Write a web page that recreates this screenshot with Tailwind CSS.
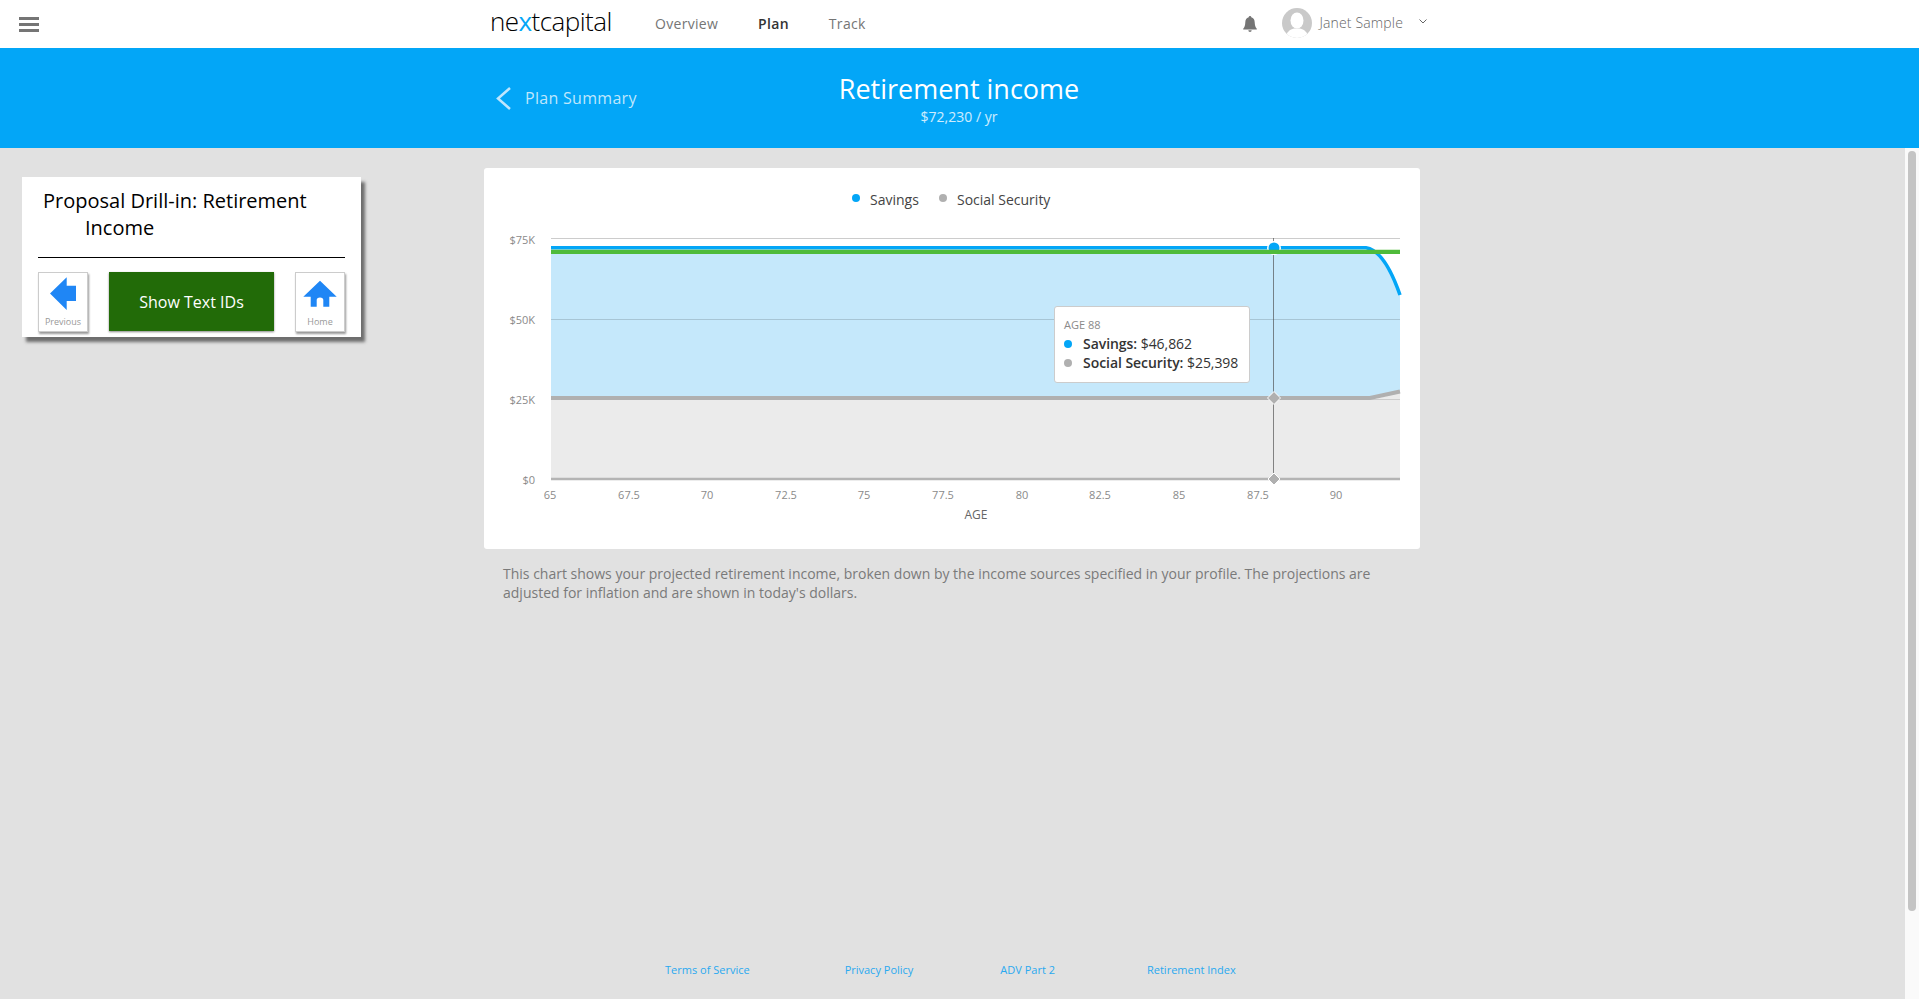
<!DOCTYPE html>
<html lang="en">
<head>
    <meta charset="UTF-8">
    <title>Retirement income</title>
    <script src="https://cdn.jsdelivr.net/npm/@tailwindcss/browser@4"></script>
</head>
<body class="bg-white font-['Open_Sans',sans-serif] overflow-hidden">
<div class="flex flex-col w-[1919px] h-[999px] bg-white">

    <!-- top nav -->
    <header class="flex items-center h-12 bg-white">
        <svg class="ml-[19px] w-5 h-[15px]" viewBox="0 0 20 15"><path d="M0 0h20v3H0zM0 6h20v3H0zM0 12h20v3H0z" fill="#757575"/></svg>
        <div class="ml-[451px] -mt-[6px] w-[125px] text-[26px] font-light tracking-[-0.55px] text-black leading-none whitespace-nowrap">ne<span class="text-[#03a6f7] font-normal">x</span>tcapital</div>
        <nav class="flex ml-10 gap-10 text-sm font-medium text-[#757575] tracking-[0.3px]">
            <a>Overview</a>
            <a class="text-[#333] font-semibold">Plan</a>
            <a>Track</a>
        </nav>
        <div class="flex items-center ml-auto mr-[492px]">
            <svg class="-mt-px w-4 h-4" viewBox="0 0 16 16"><path d="M8 0a1.3 1.3 0 0 1 1.3 1.3C11.6 2 12.6 3.8 12.7 6.200c.1 3 .6 4.800 2.100 6.600v.7H1.200v-.7C2.700 11 3.200 9.200 3.300 6.200 3.400 3.800 4.400 2 6.700 1.300A1.300 1.300 0 0 1 8 0zM6.300 14.300h3.400a1.700 1.700 0 0 1-3.400 0z" fill="#757575"/></svg>
            <svg class="ml-6 -mt-[3px] w-[30px] h-[30px]" viewBox="0 0 30 30"><defs><clipPath id="av"><circle cx="15" cy="15" r="15"/></clipPath></defs><circle cx="15" cy="15" r="15" fill="#c9c9c9"/><g clip-path="url(#av)" fill="#fff"><ellipse cx="15" cy="12.500" rx="6.500" ry="8"/><path d="M4 30c0-6 4-8.500 8-9.500h6c4 1 8 3.500 8 9.500z"/></g></svg>
            <span class="ml-[7px] -mt-[3px] text-sm font-light text-[#666] tracking-[0.15px]">Janet Sample</span>
            <svg class="ml-4 -mt-[5px] w-2 h-[5px]" viewBox="0 0 8 5"><path d="M.5.500 4 4 7.500.500" fill="none" stroke="#666"/></svg>
        </div>
    </header>

    <!-- title bar -->
    <div class="flex items-center h-[100px] bg-[#03a6f7] text-white">
        <svg class="ml-[496px] w-[15px] h-[23px]" viewBox="0 0 15 23"><path d="M14 1 2 11.500 14 22" fill="none" stroke="#bfe6fd" stroke-width="2.500"/></svg>
        <a class="ml-[14px] w-[112px] text-base text-[#bfe6fd] tracking-[0.3px] whitespace-nowrap">Plan Summary</a>
        <div class="ml-[122px] w-[400px] pt-[2px] text-center">
            <div class="text-[27px] leading-[36px]">Retirement income</div>
            <div class="text-sm leading-5 text-white/80">$72,230 / yr</div>
        </div>
    </div>

    <div class="flex h-[851px]">
        <main class="flex flex-col flex-1 bg-[#e1e1e1]">
            <div class="flex flex-1">
                <!-- proposal panel -->
                <div class="w-[484px] pl-[22px] pt-[29px]">
                    <div class="w-[339px] h-[160px] bg-white shadow-[4px_5px_3px_#6e6e6e]">
                        <h2 class="pt-[10px] pl-[63px] pr-4 -indent-[42px] text-xl leading-[27px] text-black">Proposal Drill-in: Retirement Income</h2>
                        <div class="mx-4 mt-[16px] border-t border-black"></div>
                        <div class="flex justify-between mx-4 mt-[14px]">
                            <button class="flex flex-col items-center w-[50px] h-[60px] bg-white border border-[#ccc] shadow-[1px_2px_2px_#999]">
                                <svg class="w-[50px] h-[44px] -mx-px -mt-px" viewBox="0 0 50 44"><path d="M12 21.500 28.700 5.300v8.400H38v15.300h-9.300V38z" fill="#1f86f5"/></svg>
                                <span class="text-[9px] leading-3 text-[#999]">Previous</span>
                            </button>
                            <button class="w-[165px] h-[59px] bg-[#226b08] text-white text-base shadow-[0_1px_2px_#888]">Show Text IDs</button>
                            <button class="flex flex-col items-center w-[50px] h-[60px] bg-white border border-[#ccc] shadow-[1px_2px_2px_#999]">
                                <svg class="w-[50px] h-[44px] -mx-px -mt-px" viewBox="0 0 50 44"><path d="M25 8.700 41.700 24.700H34.300V34.700H28.300V28a3.300 2.500 0 0 0-6.600 0v6.700H15.700V24.700H8.300z" fill="#1f86f5"/></svg>
                                <span class="text-[9px] leading-3 text-[#999]">Home</span>
                            </button>
                        </div>
                    </div>
                </div>

                <!-- chart column -->
                <div class="w-[936px] pt-5">
                    <div class="relative h-[381px] bg-white rounded-[3px]">
                        <svg class="w-[936px] h-[381px]" viewBox="484 168 936 381" font-family="Open Sans, sans-serif">
                            <circle cx="856" cy="198" r="4" fill="#03a6f7"/>
                            <text x="870" y="205" font-size="14" fill="#444">Savings</text>
                            <circle cx="943" cy="198" r="4" fill="#b0b0b0"/>
                            <text x="957" y="205" font-size="14" fill="#444">Social Security</text>

                            <path d="M551 250H1370C1385 256 1393 278 1400 295V396H551Z" fill="#c5e8fb"/>
                            <path d="M551 400H1370L1400 393V479H551Z" fill="#ebebeb"/>

                            <path d="M551 238.500H1400" stroke="#ccc"/>
                            <path d="M551 319.500H1400" stroke="#000" stroke-opacity=".15"/>
                            <path d="M1370 399.500H1400" stroke="#ccc"/>

                            <path d="M551 247.700H1366C1381 250 1392 272 1400 295" fill="none" stroke="#03a6f7" stroke-width="3.500"/>
                            <path d="M551 398H1370L1400 391.500" fill="none" stroke="#b0b0b0" stroke-width="4"/>
                            <path d="M551 479H1400" stroke="#b4b4b4" stroke-width="2.500"/>

                            <path d="M1273.500 238V479" stroke="#4a4a4a" stroke-opacity=".65"/>
                            <circle cx="1274" cy="248" r="7" fill="#fff"/>
                            <circle cx="1274" cy="248" r="5.500" fill="#03a6f7"/>
                            <path d="M551 251.800H1400" stroke="#4fbb3a" stroke-width="4.300"/>
                            <path d="M1274 391.500 1280.500 398 1274 404.500 1267.500 398Z" fill="#b0b0b0" stroke="#fff"/>
                            <path d="M1274 473 1280 479 1274 485 1268 479Z" fill="#b0b0b0" stroke="#fff"/>

                            <g font-size="11" fill="#8a8a8a" text-anchor="end">
                                <text x="535" y="244">$75K</text>
                                <text x="535" y="324">$50K</text>
                                <text x="535" y="404">$25K</text>
                                <text x="535" y="484">$0</text>
                            </g>
                            <g font-size="11" fill="#8a8a8a" text-anchor="middle">
                                <text x="550" y="499">65</text>
                                <text x="629" y="499">67.5</text>
                                <text x="707" y="499">70</text>
                                <text x="786" y="499">72.5</text>
                                <text x="864" y="499">75</text>
                                <text x="943" y="499">77.5</text>
                                <text x="1022" y="499">80</text>
                                <text x="1100" y="499">82.5</text>
                                <text x="1179" y="499">85</text>
                                <text x="1258" y="499">87.5</text>
                                <text x="1336" y="499">90</text>
                            </g>
                            <text x="976" y="519" font-size="12" fill="#666" text-anchor="middle">AGE</text>
                        </svg>

                        <!-- tooltip -->
                        <div class="absolute left-[570px] top-[138px] w-[196px] h-[77px] bg-white border border-[#ccc] rounded-[3px] pl-[9px] pt-[10px]">
                            <div class="text-[11px] leading-4 text-[#8a8a8a]">AGE 88</div>
                            <div class="flex items-center h-[19px] mt-[1px] text-sm text-[#333] tracking-[-0.05px]">
                                <span class="w-2 h-2 rounded-full bg-[#03a6f7]"></span>
                                <span class="ml-[11px] whitespace-nowrap"><span class="font-semibold">Savings:</span> $46,862</span>
                            </div>
                            <div class="flex items-center h-[19px] text-sm text-[#333] tracking-[-0.05px]">
                                <span class="w-2 h-2 rounded-full bg-[#b0b0b0]"></span>
                                <span class="ml-[11px] whitespace-nowrap"><span class="font-semibold">Social Security:</span> $25,398</span>
                            </div>
                        </div>
                    </div>
                    <p class="mt-[15px] pl-[19px] pr-[18px] text-sm leading-[19px] text-[#7a7a7a]">This chart shows your projected retirement income, broken down by the income sources specified in your profile. The projections are adjusted for inflation and are shown in today's dollars.</p>
                </div>
            </div>

            <footer class="flex h-[52px] pt-[15px] text-[11px] leading-4 text-[#2aa9f0]">
                <a class="ml-[665px]">Terms of Service</a>
                <a class="ml-[95px]">Privacy Policy</a>
                <a class="ml-[87px]">ADV Part 2</a>
                <a class="ml-[92px]">Retirement Index</a>
            </footer>
        </main>

        <!-- scrollbar -->
        <div class="w-[14px] bg-[#fafafa] pl-[3px] pt-[3px]">
            <div class="w-2 h-[760px] rounded-full bg-[#c4c4c4]"></div>
        </div>
    </div>
</div>
</body>
</html>
